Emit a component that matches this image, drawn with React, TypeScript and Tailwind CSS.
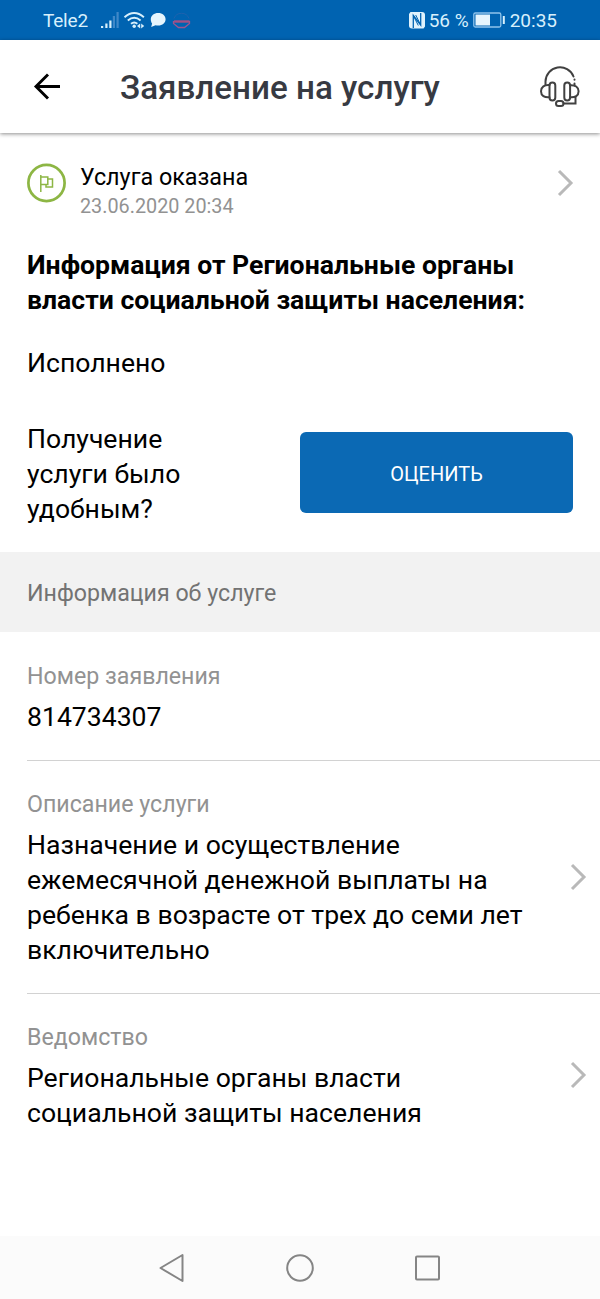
import React from "react";
import { clsx } from "clsx";

interface InfoRowProps {
  label: string;
  lines: string[];
  hasLink?: boolean;
  last?: boolean;
}

const Chevron = () => (
  <svg width="18" height="28" viewBox="0 0 18 28" fill="none" stroke="#b9b9b9" strokeWidth="3" className="shrink-0">
    <path d="M2 2 L14 14 L2 26" />
  </svg>
);

const StatusBar = () => (
  <div className="flex h-10 shrink-0 items-center justify-between bg-[#0063b1] pr-[43px] pl-[43px] text-[19px] leading-none text-[#d8f0fc]">
    <div className="flex items-center">
      <span className="w-[57px] tracking-[-0.2px]">Tele2</span>
      {/* Signal, wifi, message, app */}
      <svg width="92" height="24" viewBox="100 8 92 24" fill="none">
        <path d="M101 26h2.200v2h-2.200zM105.300 23.500h2.200v4.500h-2.200zM109.300 20.500h2.200v7.500h-2.200z" fill="#d8f0fc" />
        <path d="M112.800 16h2.200v12h-2.200zM116.500 12h2.200v16h-2.200z" fill="#3f88c8" />
        <g stroke="#d8f0fc" strokeWidth="1.900">
          <path d="M124.500 17.200q9.700 -8.400 19.400 0" />
          <path d="M127.800 20.500q6.400 -5.400 12.800 0" />
          <path d="M131 23.700q3.200 -2.600 6.400 0" />
        </g>
        <circle cx="134.200" cy="26.200" r="1.700" fill="#d8f0fc" />
        <path d="M140.200 23.500v5l-3.200 -2.500zM141.200 23.500v5l3 -2.500z" fill="#d8f0fc" />
        <path d="M158.200 13c4.200 0 7.400 2.700 7.400 6.300s-3.200 6.300 -7.400 6.300c-.9 0 -1.800 -.1 -2.600 -.4l-4.400 1.900 .9 -3.500c-.8 -1.100 -1.300 -2.600 -1.300 -4.300 0 -3.600 3.200 -6.300 7.400 -6.300z" fill="#e6f5fd" />
        <path d="M174 18.500a8 8 0 0 1 15 0" stroke="#1f62ae" />
        <path d="M174 21.500h15.500" stroke="#a45084" strokeWidth="2.400" />
        <path d="M173.500 21v2.500l5 4h6l5 -4V21" stroke="#9d5590" strokeWidth="1.300" />
      </svg>
    </div>
    <div className="flex items-center">
      <svg width="18" height="19" viewBox="0 0 18 19" className="mr-[3px]">
        <path d="M2.500 1H14a3 3 0 0 1 3 3v11.500l-1.500 2H4a3 3 0 0 1 -3 -3V3z" fill="#e0f2fc" />
        <path d="M5.300 17V4.500l7.400 9.500V2" stroke="#0063b1" strokeWidth="1.300" fill="none" />
        <path d="M5.300 4.500l5 10M7.700 4l5 10" stroke="#0063b1" strokeWidth="1" fill="none" />
      </svg>
      <span className="w-[44px] whitespace-nowrap">56 %</span>
      <svg width="33" height="18" viewBox="0 0 33 18" fill="none">
        <rect x=".8" y="2" width="27" height="14" rx="1.500" stroke="#8ec4ec" strokeWidth="1.300" />
        <rect x="2.500" y="3.500" width="14.500" height="11" fill="#e6f5fd" />
        <path d="M30.800 5v8" stroke="#d8f0fc" strokeWidth="2" />
      </svg>
      <span className="ml-[4px]">20:35</span>
    </div>
  </div>
);

const Header = () => (
  <header className="z-10 flex h-[93px] shrink-0 items-center bg-white pr-5 pl-[33px] shadow-[0_1px_4px_rgba(0,0,0,0.45)]">
    <svg width="28" height="28" viewBox="0 0 28 28" fill="none" stroke="#000" strokeWidth="2.900">
      <path d="M27 13.500H3M15 1.500L3 13.500l12 12" />
    </svg>
    <h1 className="ml-[59px] flex-1 pt-[2px] text-[33.200px] leading-10 font-medium whitespace-nowrap text-[#373a42]">
      Заявление на услугу
    </h1>
    <svg width="40" height="42" viewBox="0 0 40 42" fill="none" stroke="#414141" strokeWidth="2" strokeLinecap="round">
      <path d="M5.500 19v-3.500a14.500 14.500 0 0 1 28 -5" />
      <path d="M34.500 13.500v.2M34.500 17.500v2" />
      <path d="M9.500 19c-5 -.5 -8.500 2 -8.500 6.300s3.500 6.500 8.500 6" />
      <rect x="9.500" y="16.500" width="5.800" height="18" rx="2.900" />
      <rect x="24.300" y="16.500" width="5.800" height="18" rx="2.900" />
      <path d="M30.100 19.200c5 -.5 8.500 1.800 8.500 6.100s-3.500 6.500 -8.500 6" />
      <path d="M35.500 31v6.500h-12" />
      <rect x="16" y="35" width="7.500" height="5" rx="2.500" />
    </svg>
  </header>
);

const InfoRow = ({ label, lines, hasLink, last }: InfoRowProps) => (
  <div className={clsx("ml-[27px] flex items-center pt-[29px] pr-[12px] pb-[26px]", !last && "border-b border-[#d2d2d2]")}>
    <div className="flex-1">
      <div className="mb-[9px] h-[28px] text-[23.200px] leading-[28px] text-[#929292]">{label}</div>
      {lines.map((line) => (
        <div key={line} className="text-[26.600px] leading-[35px] whitespace-nowrap">
          {line}
        </div>
      ))}
    </div>
    {hasLink && (
      <div className="-mt-[4px]">
        <Chevron />
      </div>
    )}
  </div>
);

export default function App() {
  return (
    <div className="flex h-[1299px] w-[600px] flex-col overflow-hidden bg-white font-['Roboto',sans-serif] text-black">
      <StatusBar />
      <Header />

      <main className="flex-1">
        <div className="flex h-[114px] items-center px-[25px] pt-[3px]">
          <svg width="42" height="42" viewBox="0 0 42 42" fill="none" stroke="#8db644" className="mt-[-18px]">
            <circle cx="21.500" cy="21" r="18.100" strokeWidth="2.700" />
            <path d="M15.800 13v17M15.800 15h7v7.500h-7M22.800 17h4.700v8h-6.500v-2.500" strokeWidth="1.500" />
          </svg>
          <div className="ml-[13px] flex-1">
            <div className="text-[23.330px] leading-[30px]">Услуга оказана</div>
            <div className="text-[19.800px] leading-[30px] text-[#929292]">23.06.2020 20:34</div>
          </div>
          <div className="mt-[-18px]">
            <Chevron />
          </div>
        </div>

        <div className="px-[27px] text-[26.600px] leading-[35px]">
          <h2 className="font-bold whitespace-nowrap">
            Информация от Региональные органы
            <br />
            власти социальной защиты населения:
          </h2>
          <p className="mt-7">Исполнено</p>
          <div className="mt-[41px] flex items-start justify-between">
            <p>
              Получение
              <br />
              услуги было
              <br />
              удобным?
            </p>
            <button className="mt-[11px] h-[81px] w-[273px] rounded-md bg-[#0b69b4] pt-[3px] text-[20px] text-white">
              ОЦЕНИТЬ
            </button>
          </div>
        </div>

        <div className="mt-[26px] flex h-[80px] items-center bg-[#f2f2f2] px-[27px] pt-[2px] text-[23.200px] text-[#737373]">
          Информация об услуге
        </div>

        <div className="pt-px">
          <InfoRow label="Номер заявления" lines={["814734307"]} />
          <InfoRow
            label="Описание услуги"
            lines={[
              "Назначение и осуществление",
              "ежемесячной денежной выплаты на",
              "ребенка в возрасте от трех до семи лет",
              "включительно",
            ]}
            hasLink
          />
          <InfoRow label="Ведомство" lines={["Региональные органы власти", "социальной защиты населения"]} hasLink last />
        </div>
      </main>

      {/* Android navigation */}
      <nav className="flex h-[63px] shrink-0 items-center justify-center gap-[99px] bg-[#fbfbfb]">
        <svg width="28" height="30" viewBox="0 0 28 30" fill="none" stroke="#858585" strokeWidth="2" strokeLinejoin="round">
          <path d="M24.500 2v26L2.500 15z" />
        </svg>
        <svg width="30" height="30" viewBox="0 0 30 30" fill="none" stroke="#858585" strokeWidth="2">
          <circle cx="15" cy="15" r="12.800" />
        </svg>
        <svg width="28" height="30" viewBox="0 0 28 30" fill="none" stroke="#858585" strokeWidth="2">
          <rect x="2" y="3.500" width="23" height="23" rx="1" />
        </svg>
      </nav>
    </div>
  );
}
